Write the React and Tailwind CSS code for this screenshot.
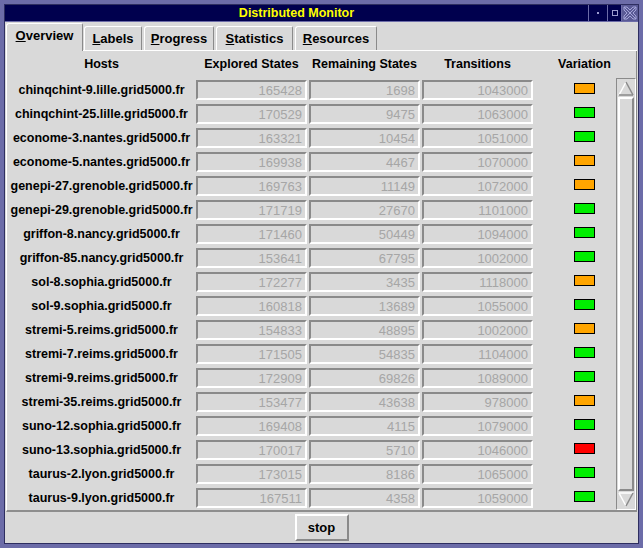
const rows = [
  ['chinqchint-9.lille.grid5000.fr', '165428', '1698', '1043000', 'o'],
  ['chinqchint-25.lille.grid5000.fr', '170529', '9475', '1063000', 'g'],
  ['econome-3.nantes.grid5000.fr', '163321', '10454', '1051000', 'g'],
  ['econome-5.nantes.grid5000.fr', '169938', '4467', '1070000', 'o'],
  ['genepi-27.grenoble.grid5000.fr', '169763', '11149', '1072000', 'o'],
  ['genepi-29.grenoble.grid5000.fr', '171719', '27670', '1101000', 'g'],
  ['griffon-8.nancy.grid5000.fr', '171460', '50449', '1094000', 'g'],
  ['griffon-85.nancy.grid5000.fr', '153641', '67795', '1002000', 'g'],
  ['sol-8.sophia.grid5000.fr', '172277', '3435', '1118000', 'o'],
  ['sol-9.sophia.grid5000.fr', '160818', '13689', '1055000', 'g'],
  ['stremi-5.reims.grid5000.fr', '154833', '48895', '1002000', 'o'],
  ['stremi-7.reims.grid5000.fr', '171505', '54835', '1104000', 'g'],
  ['stremi-9.reims.grid5000.fr', '172909', '69826', '1089000', 'g'],
  ['stremi-35.reims.grid5000.fr', '153477', '43638', '978000', 'o'],
  ['suno-12.sophia.grid5000.fr', '169408', '4115', '1079000', 'g'],
  ['suno-13.sophia.grid5000.fr', '170017', '5710', '1046000', 'r'],
  ['taurus-2.lyon.grid5000.fr', '173015', '8186', '1065000', 'g'],
  ['taurus-9.lyon.grid5000.fr', '167511', '4358', '1059000', 'g'],
]

const swatch = { o: 'bg-[#ffa500]', g: 'bg-[#00ee00]', r: 'bg-[#ff0000]' }

const tabs = [
  { first: 'L', rest: 'abels', w: 'w-[58px]' },
  { first: 'P', rest: 'rogress', w: 'w-[70px]' },
  { first: 'S', rest: 'tatistics', w: 'w-[77px]' },
  { first: 'R', rest: 'esources', w: 'w-[82px]' },
]

function Entry({ value }) {
  return (
    <div className="w-[111px] h-[20px] shrink-0 border-2 border-t-[#8a8a8a] border-l-[#8a8a8a] border-b-white border-r-white flex items-center justify-end pr-[3px] text-[13px] leading-none text-[#a6a6a6]">
      {value}
    </div>
  )
}

function Arrow({ down }) {
  return (
    <div className="h-[17px] flex items-center justify-center shrink-0">
      <svg width="16" height="15" viewBox="0 0 16 15">
        {down ? (
          <>
            <path d="M1 1 H15 L8 14 Z" fill="#d9d9d9" />
            <path d="M1 1 H15" stroke="#ffffff" strokeWidth="1.5" />
            <path d="M1 1 L8 14" stroke="#ffffff" strokeWidth="1.5" />
            <path d="M15 1 L8 14" stroke="#8a8a8a" strokeWidth="1.5" />
          </>
        ) : (
          <>
            <path d="M8 1 L15 14 H1 Z" fill="#d9d9d9" />
            <path d="M8 1 L1 14" stroke="#ffffff" strokeWidth="1.5" />
            <path d="M8 1 L15 14" stroke="#8a8a8a" strokeWidth="1.5" />
            <path d="M1 14 H15" stroke="#8a8a8a" strokeWidth="1.5" />
          </>
        )}
      </svg>
    </div>
  )
}

export default function App() {
  return (
    <div className="w-[643px] h-[548px] bg-[#6c6ca8] p-[4px] font-['Liberation_Sans',Arial,sans-serif] text-black select-none">
      <div className="h-full flex flex-col border border-[#2e2e60]">

        {/* title bar */}
        <div className="flex h-[16px] bg-[#00004e] shrink-0">
          <div className="flex-1 flex items-center justify-center text-[#ffff00] font-bold text-[12.5px] leading-none">
            Distributed Monitor
          </div>
          <div className="w-px bg-[#6c6ca8]" />
          <div className="w-[18px] flex items-center justify-center">
            <div className="w-[2px] h-[2px] bg-[#9c9cd0]" />
          </div>
          <div className="w-px bg-[#6c6ca8]" />
          <div className="w-[13px] flex items-center justify-center">
            <div className="w-[6px] h-[6px] border border-[#9c9cd0]" />
          </div>
          <div className="w-px bg-[#6c6ca8]" />
          <div className="w-[16px] bg-[#5a5a96] flex items-center justify-center">
            <svg width="14" height="14" viewBox="0 0 14 14" fill="none" stroke="#a4a4d8" strokeWidth="1">
              <path d="M1 1 L13 13 M13 1 L1 13 M1 1 H4 L7 4 L10 1 H13 V4 L10 7 L13 10 V13 H10 L7 10 L4 13 H1 V10 L4 7 L1 4 Z" />
            </svg>
          </div>
        </div>
        <div className="h-px bg-[#6c6ca8] shrink-0" />

        {/* window body */}
        <div className="flex-1 flex flex-col bg-[#d9d9d9] px-[1px]">

          {/* tabs */}
          <div className="flex items-end h-[29px] shrink-0">
            <div className="w-[77px] h-[28px] border-l border-t border-r border-l-white border-t-white border-r-[#8a8a8a] rounded-tl-[3px] rounded-tr-[2px] flex items-center justify-center pb-[3px] font-bold text-[13px]">
              <span><span className="underline">O</span>verview</span>
            </div>
            <div className="flex-1 h-full flex items-end gap-[2px] pl-[1px] border-b border-white">
              {tabs.map(t => (
                <div key={t.first}
                  className={`${t.w} h-[24px] border-l border-t border-r border-l-white border-t-white border-r-[#8a8a8a] rounded-tl-[3px] rounded-tr-[2px] flex items-center justify-center font-bold text-[13px]`}>
                  <span><span className="underline">{t.first}</span>{t.rest}</span>
                </div>
              ))}
            </div>
          </div>

          {/* panel */}
          <div className="h-[461px] shrink-0 flex flex-col border-l border-r border-b-2 border-l-white border-r-[#8a8a8a] border-b-[#8e8e8e]">
            <div className="h-[27px] flex items-center font-bold text-[12.5px] shrink-0">
              <div className="w-[189px] text-center">Hosts</div>
              <div className="w-[111px] text-center">Explored States</div>
              <div className="w-[2px]" />
              <div className="w-[111px] text-center">Remaining States</div>
              <div className="w-[2px]" />
              <div className="w-[111px] text-center">Transitions</div>
              <div className="flex-1 pl-[20px] text-center">Variation</div>
              <div className="w-[20px]" />
            </div>

            <div className="flex-1 flex">
              <div className="flex-1 flex flex-col">
                {rows.map(([host, exp, rem, tr, v]) => (
                  <div key={host} className="h-[24px] flex items-center">
                    <div className="w-[189px] text-center font-bold text-[12.5px] leading-none whitespace-nowrap">{host}</div>
                    <Entry value={exp} />
                    <div className="w-[2px]" />
                    <Entry value={rem} />
                    <div className="w-[2px]" />
                    <Entry value={tr} />
                    <div className="flex-1 flex justify-center pl-[20px] pb-[4px]">
                      <div className={`w-[21px] h-[11px] border border-black ${swatch[v]}`} />
                    </div>
                  </div>
                ))}
              </div>

              {/* scrollbar */}
              <div className="w-[20px] h-[432px] flex flex-col border border-t-[#8a8a8a] border-l-[#8a8a8a] border-b-white border-r-white pt-[1px] pb-[1px]">
                <Arrow />
                <div className="flex-1 mx-[1px] border-2 border-t-white border-l-white border-b-[#8a8a8a] border-r-[#8a8a8a]" />
                <Arrow down />
              </div>
            </div>
          </div>

          {/* bottom buttons */}
          <div className="flex-1 flex justify-center pt-[2px]">
            <button className="w-[54px] h-[27px] border-2 border-t-white border-l-white border-b-[#8a8a8a] border-r-[#8a8a8a] bg-[#d9d9d9] font-bold text-[13px] leading-none flex items-center justify-center">
              stop
            </button>
          </div>
        </div>
      </div>
    </div>
  )
}
